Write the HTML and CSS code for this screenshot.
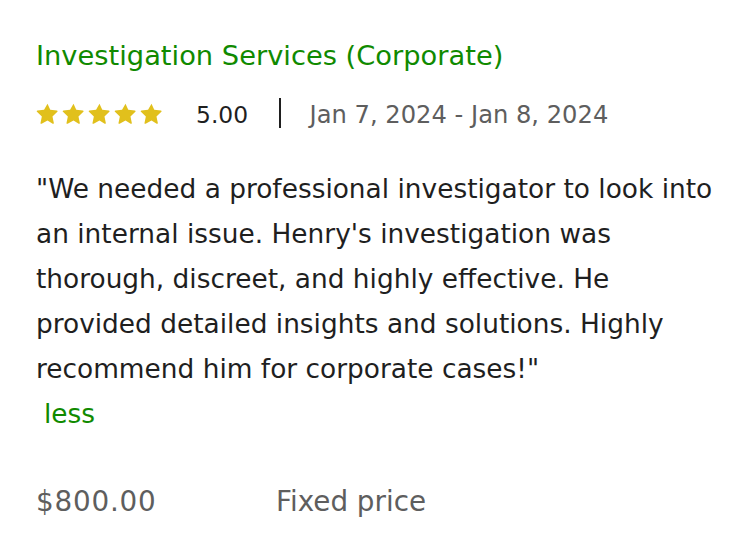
FILE: index.html
```html
<!DOCTYPE html>
<html>
<head>
<meta charset="utf-8">
<link rel="stylesheet" href="styles.css">
</head>
<body>
<div class="review">
  <h2 class="title">Investigation Services (Corporate)</h2>
  <div class="meta">
    <div class="stars">
      <svg viewBox="0 0 24 24" class="star"><path d="M12 1.8l2.9 6.3 6.9.8c.7.1 1 .9.5 1.4l-5.1 4.7 1.4 6.8c.1.7-.6 1.2-1.2.9L12 19.3l-6.1 3.4c-.6.3-1.4-.2-1.2-.9l1.4-6.8-5.1-4.7c-.5-.5-.2-1.3.5-1.4l6.9-.8z"/></svg>
      <svg viewBox="0 0 24 24" class="star"><path d="M12 1.8l2.9 6.3 6.9.8c.7.1 1 .9.5 1.4l-5.1 4.7 1.4 6.8c.1.7-.6 1.2-1.2.9L12 19.3l-6.1 3.4c-.6.3-1.4-.2-1.2-.9l1.4-6.8-5.1-4.7c-.5-.5-.2-1.3.5-1.4l6.9-.8z"/></svg>
      <svg viewBox="0 0 24 24" class="star"><path d="M12 1.8l2.9 6.3 6.9.8c.7.1 1 .9.5 1.4l-5.1 4.7 1.4 6.8c.1.7-.6 1.2-1.2.9L12 19.3l-6.1 3.4c-.6.3-1.4-.2-1.2-.9l1.4-6.8-5.1-4.7c-.5-.5-.2-1.3.5-1.4l6.9-.8z"/></svg>
      <svg viewBox="0 0 24 24" class="star"><path d="M12 1.8l2.9 6.3 6.9.8c.7.1 1 .9.5 1.4l-5.1 4.7 1.4 6.8c.1.7-.6 1.2-1.2.9L12 19.3l-6.1 3.4c-.6.3-1.4-.2-1.2-.9l1.4-6.8-5.1-4.7c-.5-.5-.2-1.3.5-1.4l6.9-.8z"/></svg>
      <svg viewBox="0 0 24 24" class="star"><path d="M12 1.8l2.9 6.3 6.9.8c.7.1 1 .9.5 1.4l-5.1 4.7 1.4 6.8c.1.7-.6 1.2-1.2.9L12 19.3l-6.1 3.4c-.6.3-1.4-.2-1.2-.9l1.4-6.8-5.1-4.7c-.5-.5-.2-1.3.5-1.4l6.9-.8z"/></svg>
    </div>
    <span class="score">5.00</span>
    <span class="divider"></span>
    <span class="dates">Jan 7, 2024 - Jan 8, 2024</span>
  </div>
  <p class="text">"We needed a professional investigator to look into an internal issue. Henry's investigation was thorough, discreet, and highly effective. He provided detailed insights and solutions. Highly recommend him for corporate cases!"</p>
  <a class="less" href="#">less</a>
  <div class="price">
    <span class="amount">$800.00</span>
    <span class="type">Fixed price</span>
  </div>
</div>
</body>
</html>
```

FILE: styles.css
```css
* { box-sizing: border-box; }
body {
  margin: 0;
  background: #fff;
  font-family: "DejaVu Sans", "Liberation Sans", sans-serif;
}
.review {
  padding: 40px 36px 0 36px;
  width: 751px;
}
.title {
  margin: 0;
  font-size: 27.3px;
  line-height: 32px;
  font-weight: normal;
  color: #108a00;
}
.meta {
  display: flex;
  align-items: center;
  margin-top: 23px;
  height: 36px;
}
.stars {
  display: flex;
  gap: 3px;
}
.star {
  display: block;
  width: 23px;
  height: 23px;
  fill: #e1c01c;
}
.score,
.dates {
  line-height: 32px;
  padding-top: 4px;
}
.score {
  font-size: 23.4px;
  margin-left: 33px;
  color: #1f1f1f;
}
.divider {
  width: 1.5px;
  height: 30px;
  background: #1f1f1f;
  margin-left: 31px;
}
.dates {
  font-size: 24.2px;
  margin-left: 29px;
  color: #5e5e5e;
}
.text {
  margin: 35px 0 0 0;
  font-size: 26.4px;
  line-height: 45px;
  color: #1f1f1f;
  width: 690px;
}
.less {
  display: block;
  margin-left: 8px;
  font-size: 26.4px;
  line-height: 45px;
  color: #108a00;
  text-decoration: none;
}
.price {
  display: flex;
  margin-top: 43px;
  font-size: 27.8px;
  line-height: 45px;
  color: #5e5e5e;
}
.amount {
  width: 240px;
  letter-spacing: 0.8px;
}
```
